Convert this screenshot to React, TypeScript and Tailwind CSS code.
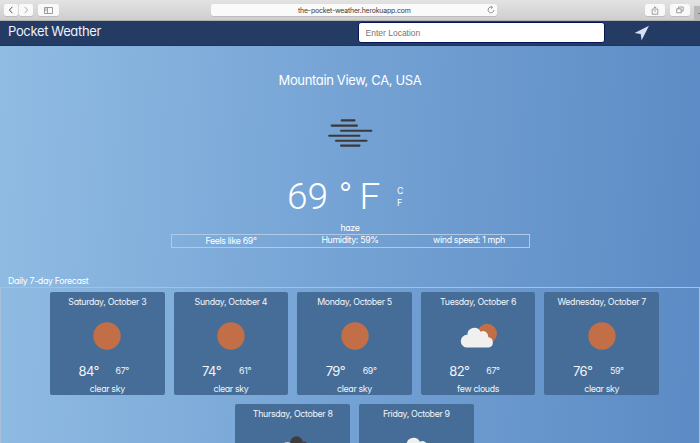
import React from "react";

type Icon = "sun" | "few" | "broken" | "cloud";
type Day = { date: string; icon: Icon; hi?: string; lo?: string; text?: string };

const days: Day[] = [
  { date: "Saturday, October 3", hi: "84", lo: "67", text: "clear sky", icon: "sun" },
  { date: "Sunday, October 4", hi: "74", lo: "61", text: "clear sky", icon: "sun" },
  { date: "Monday, October 5", hi: "79", lo: "69", text: "clear sky", icon: "sun" },
  { date: "Tuesday, October 6", hi: "82", lo: "67", text: "few clouds", icon: "few" },
  { date: "Wednesday, October 7", hi: "76", lo: "59", text: "clear sky", icon: "sun" },
  { date: "Thursday, October 8", icon: "broken" },
  { date: "Friday, October 9", icon: "cloud" },
];

const CLOUD =
  "M6.5 24.5a6.4 6.4 0 0 1-.2-12.7c.4 0 .7 0 1 .1a7 7 0 0 1 13.3-3.2 5.5 5.5 0 0 1 7.8 5.6 5.2 5.2 0 0 1 .5 10.2Z";

function WeatherIcon({ icon }: { icon: Icon }) {
  return (
    <svg viewBox="0 0 50 50" className="block h-[50px] w-[50px]" aria-hidden="true">
      {icon === "sun" && <circle cx="25" cy="25" r="13.7" fill="#c26f48" />}
      {icon === "few" && (
        <>
          <circle cx="34.2" cy="22.6" r="9.8" fill="#c26f48" />
          <path d={CLOUD} transform="translate(7 12)" fill="#f0f0ef" />
        </>
      )}
      {icon === "broken" && (
        <>
          <circle cx="28.5" cy="19.4" r="6.2" fill="#403b3e" />
          <circle cx="36" cy="22.6" r="4.2" fill="#4b3d43" />
          <path d={CLOUD} transform="translate(4.8 14.6)" fill="#f0f0ef" />
        </>
      )}
      {icon === "cloud" && <path d={CLOUD} transform="translate(8.3 10)" fill="#f0f0ef" />}
    </svg>
  );
}

function Card({ day }: { day: Day }) {
  return (
    <article className="flex h-[103.5px] w-[114.6px] shrink-0 flex-col items-center rounded-[2px] bg-[#466d98] pt-[4px] text-[#f2f5f9]">
      <h3 className="h-3 leading-3 whitespace-nowrap">{day.date}</h3>
      <div className="mt-[3px] h-[50px]">
        <WeatherIcon icon={day.icon} />
      </div>
      {day.hi && (
        <>
          <div className="mt-[1px] flex h-[18px] w-full items-center pl-[28.5px]">
            <span className="w-[37px] text-[13px] leading-[18px] tracking-[-0.6px]">{day.hi}°</span>
            <span className="leading-[18px]">{day.lo}°</span>
          </div>
          <p className="mt-[3px] leading-3">{day.text}</p>
        </>
      )}
    </article>
  );
}

function Toolbar() {
  const button = "flex h-3 items-center justify-center rounded-[2px] bg-[#f9f9f9] shadow-[0_0.5px_0.5px_#aaa]";
  return (
    <div className="flex h-[21px] items-center border-b border-[#b2b2b2] bg-linear-to-b from-[#e3e3e3] to-[#cecece]">
      <div className={button + " ml-1 w-[14px]"}>
        <svg viewBox="0 0 8 8" className="h-2 w-2" fill="none" stroke="#555" strokeWidth="1"><path d="M5.4.8 2.4 4l3 3.2" /></svg>
      </div>
      <div className={button + " ml-px w-[14px]"}>
        <svg viewBox="0 0 8 8" className="h-2 w-2" fill="none" stroke="#aaa" strokeWidth="1"><path d="M2.6.8 5.6 4l-3 3.2" /></svg>
      </div>
      <div className={button + " ml-[5px] w-[21px]"}>
        <svg viewBox="0 0 9 7" className="h-[7px] w-[9px]" fill="none" stroke="#858585" strokeWidth=".8"><path d="M.5.5h8v6h-8zM3.5.5v6M1.2 2h1.4M1.2 3.3h1.4" /></svg>
      </div>
      <div className="ml-[152px] flex h-3 w-[286px] items-center rounded-[2px] bg-[#fafafa] shadow-[0_0.5px_0.5px_#aaa]">
        <span className="ml-[87px] w-[114px] pt-px font-[Inter,sans-serif] text-[6.9px] leading-3 tracking-[-0.16px] whitespace-nowrap text-[#3a3a3a] [font-feature-settings:normal]">the-pocket-weather.herokuapp.com</span>
        <svg viewBox="0 0 8 8" className="ml-[75px] h-2 w-2" fill="none" stroke="#666" strokeWidth=".7"><path d="M5.3 1.3A2.9 2.9 0 1 0 6.9 4M3.9.1l1.6 1.3L4 2.7" /></svg>
      </div>
      <div className={button + " ml-[148px] w-5"}>
        <svg viewBox="0 0 8 9" className="h-[9px] w-2" fill="none" stroke="#777" strokeWidth=".7"><path d="M2.7 3.2H1.2v5h5.6v-5H5.3M4 6V.8M2.4 2.4 4 .8l1.6 1.6" /></svg>
      </div>
      <div className={button + " ml-[5px] w-5"}>
        <svg viewBox="0 0 8 8" className="h-2 w-2" fill="none" stroke="#777" strokeWidth=".7"><path d="M.7 2.8h4.5v4H.7zM2.5 2.8V1h4.7v4h-2" /></svg>
      </div>
      <div className="ml-auto flex h-[14px] w-[6px] items-center justify-end self-end bg-[#b9b9b9]"><span className="h-px w-[2px] bg-[#777]" /></div>
    </div>
  );
}

export default function App() {
  return (
    <div className="h-[443px] w-[700px] overflow-hidden bg-[linear-gradient(93deg,#90bce3_0%,#74a2d4_50%,#5c8bc5_100%)] font-[Inter,sans-serif] text-[8.8px] tracking-[-0.33px] text-white [font-feature-settings:'cv11']">
      <Toolbar />
      <header className="flex h-[24.5px] items-center border-b border-[#20345c] bg-[#243b64]">
        <h1 className="ml-2 w-[350px] pb-[4px] text-[13px] leading-5 tracking-[-0.35px] text-[#eef0fb]">Pocket Weather</h1>
        <input
          className="h-[21px] w-[247px] rounded-[3px] border border-[#071657] bg-white px-[6.5px] font-['Liberation_Sans',Arial,sans-serif] text-[8.5px] tracking-normal text-[#666] outline-none placeholder:text-[#757575]"
          placeholder="Enter Location"
        />
        <svg viewBox="0 0 16 16" className="ml-[29px] h-4 w-4" fill="#d9def5" aria-label="Use my location"><path d="M15 .8.6 8.1l6.1 1 .9 6.1Z" /></svg>
      </header>

      <main>
        <section className="flex flex-col items-center">
          <h2 className="mt-[24px] text-[13px] leading-5 tracking-[-0.35px]">Mountain View, CA, USA</h2>
          <svg viewBox="0 0 46 30" className="mt-[28.5px] h-[30px] w-[46px]" stroke="#3b3838" strokeWidth="2.1" strokeLinecap="round" aria-label="haze">
            <path d="M14.7 2.4h12.8M4.7 7.6H30M14 12.8h30.3M2.2 17.8h30.2M9 22.7h30.5M14 27.6h18.5" />
          </svg>
          <div className="mt-[28px] flex h-[42px] w-[126px] items-center">
            <span className="flex w-[110px] font-[Roboto,sans-serif] text-[37px] leading-[42px] font-light tracking-normal">
              <span className="w-[51.5px]">69</span>
              <span className="w-[21px]">°</span>
              <span>F</span>
            </span>
            <span className="flex flex-col leading-[12.3px]"><span>C</span><span>F</span></span>
          </div>
          <p className="mt-[3.5px] leading-3">haze</p>
          <div className="flex h-[14.5px] w-[359px] items-center border border-[#b2cae5] leading-3 whitespace-nowrap">
            <span className="w-[119px] pt-px text-center">Feels like 69°</span>
            <span className="w-[119px] pb-px text-center">Humidity: 59%</span>
            <span className="w-[119px] pb-px text-center">wind speed: 1 mph</span>
          </div>
        </section>

        <h2 className="mt-[26.5px] ml-2 leading-3">Daily 7-day Forecast</h2>
        <section className="flex h-[160px] flex-wrap content-start justify-center gap-x-[9px] gap-y-[9px] border border-[#aabfda] pt-[4px] pr-[35px] pl-11">
          {days.map((day) => (
            <Card key={day.date} day={day} />
          ))}
        </section>
      </main>
    </div>
  );
}
